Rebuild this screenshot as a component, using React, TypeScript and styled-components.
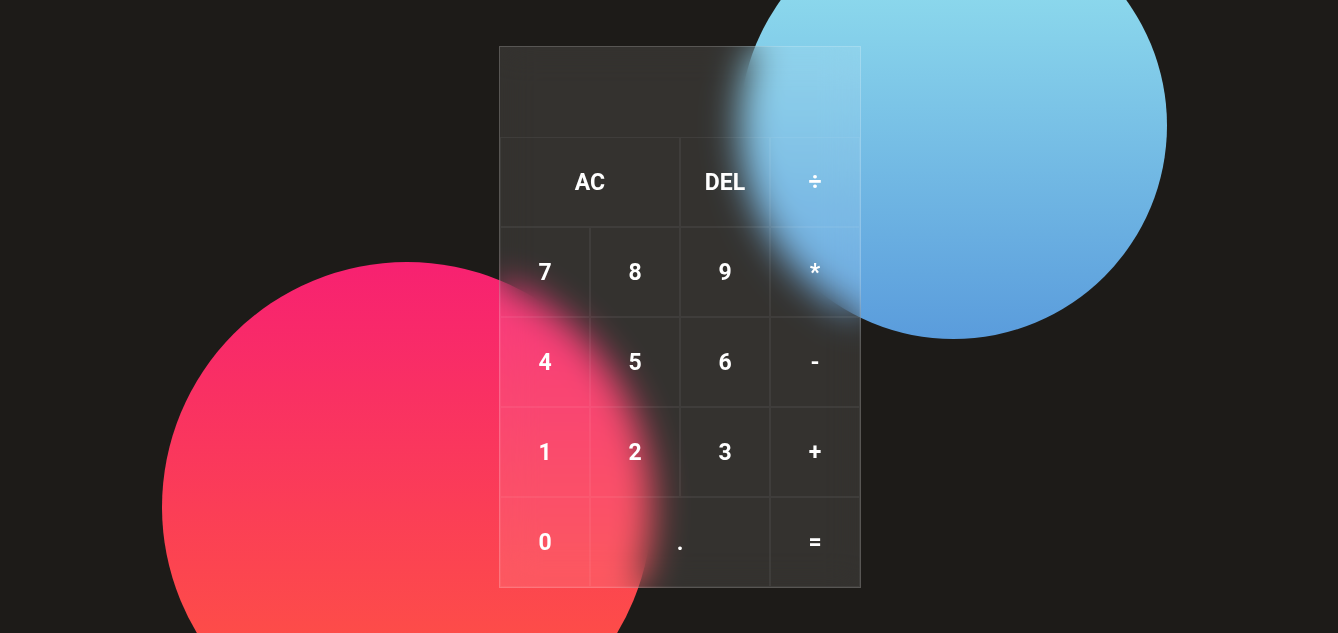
import React from "react";
import styled, { createGlobalStyle } from "styled-components";

const Global = createGlobalStyle`
  html, body { margin: 0; padding: 0; }
  body {
    background: #1d1b18;
    font-family: Roboto, "Noto Sans", "Liberation Sans", sans-serif;
    overflow: hidden;
  }
  * { box-sizing: border-box; }
`;

const Page = styled.main`
  position: relative;
  width: 100vw;
  height: 100vh;
  display: flex;
  align-items: center;
  justify-content: center;
  padding-left: 22px;
  overflow: hidden;
`;

const Circle = styled.div<{ $size: number; $left: number; $top: number; $from: string; $to: string }>`
  position: absolute;
  width: ${(p) => p.$size}px;
  height: ${(p) => p.$size}px;
  left: ${(p) => p.$left}px;
  top: ${(p) => p.$top}px;
  border-radius: 50%;
  background: linear-gradient(${(p) => p.$from}, ${(p) => p.$to});
`;

const Calculator = styled.div`
  position: relative;
  z-index: 2;
  width: 362px;
  background: rgba(255, 255, 255, 0.1);
  border: 1px solid rgba(255, 255, 255, 0.18);
  backdrop-filter: blur(18px);
  -webkit-backdrop-filter: blur(18px);
`;

const Display = styled.div`
  height: 90px;
  width: 100%;
`;

const Keys = styled.div`
  display: grid;
  grid-template-columns: repeat(4, 90px);
  grid-auto-rows: 90px;
`;

const Key = styled.button<{ $span?: number }>`
  grid-column: span ${(p) => p.$span ?? 1};
  border: 1px solid rgba(255, 255, 255, 0.06);
  background: transparent;
  color: #ffffff;
  font-family: Roboto, "Noto Sans", "Liberation Sans", sans-serif;
  font-size: 23px;
  font-weight: 700;
  display: flex;
  align-items: center;
  justify-content: center;
  padding: 2px 0 0;
  cursor: pointer;
`;

const keys: { label: string; span?: number }[] = [
  { label: "AC", span: 2 },
  { label: "DEL" },
  { label: "÷" },
  { label: "7" },
  { label: "8" },
  { label: "9" },
  { label: "*" },
  { label: "4" },
  { label: "5" },
  { label: "6" },
  { label: "-" },
  { label: "1" },
  { label: "2" },
  { label: "3" },
  { label: "+" },
  { label: "0" },
  { label: ".", span: 2 },
  { label: "=" },
];

export default function App() {
  return (
    <>
      <Global />
      <Page>
        <Circle $size={427} $left={740} $top={-88} $from="#97e6f0" $to="#5a9cdc" />
        <Circle $size={490} $left={162} $top={262} $from="#f72171" $to="#ff5a3c" />
        <Calculator>
          <Display />
          <Keys>
            {keys.map((k, i) => (
              <Key key={i} $span={k.span}>
                {k.label}
              </Key>
            ))}
          </Keys>
        </Calculator>
      </Page>
    </>
  );
}
